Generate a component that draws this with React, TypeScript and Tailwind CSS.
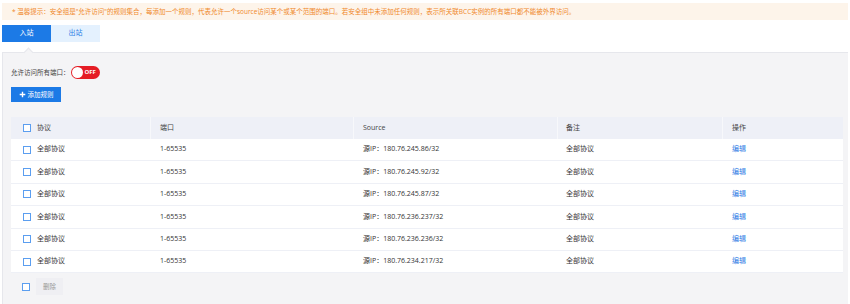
import React from 'react';

const rows = [
  '180.76.245.86/32',
  '180.76.245.92/32',
  '180.76.245.87/32',
  '180.76.236.237/32',
  '180.76.236.236/32',
  '180.76.234.217/32',
];

const Box: React.FC = () => (
  <span className="inline-block w-[8px] h-[8px] border border-[#5b9ef0] bg-white shrink-0" />
);

const App: React.FC = () => {
  return (
    <div
      className="w-[850px] h-[304px] bg-white overflow-hidden text-[#333]"
      style={{ fontFamily: '"Open Sans", "Noto Sans CJK SC", sans-serif' }}
    >
      <div className="mx-[2px] mt-[3px] h-[17px] bg-[#fdf4ea] flex items-center pl-[10px] text-[6.5px] text-[#f0892a] whitespace-nowrap">
        * 温馨提示：安全组是"允许访问"的规则集合，每添加一个规则，代表允许一个source访问某个或某个范围的端口。若安全组中未添加任何规则，表示所关联BCC实例的所有端口都不能被外界访问。
      </div>

      <div className="flex ml-[2px] mt-[5px] h-[17px] text-[7px]">
        <div className="w-[49px] bg-[#1c7ae6] text-white flex items-center justify-center">入站</div>
        <div className="w-[49px] bg-[#e4f1fe] text-[#2b7fe6] flex items-center justify-center">出站</div>
      </div>

      <div className="relative mx-[2px] mt-[10px] h-[252px] bg-[#f4f4f6] border-t border-l border-[#e6e7ec]">
        <span className="absolute left-[22px] top-[-4px] w-[7px] h-[7px] rotate-45 bg-[#f4f4f6] border-t border-l border-[#e6e7ec]" />

        <div className="flex items-center pl-[8px] pt-[13px] h-[26px]">
          <span className="text-[6.5px] text-[#444]">允许访问所有端口：</span>
          <span className="ml-[1px] w-[29px] h-[13px] rounded-full bg-[#e51d25] flex items-center pl-[1px]">
            <span className="w-[11px] h-[11px] rounded-full bg-white" />
            <span className="ml-[2px] text-[6px] font-bold text-white">OFF</span>
          </span>
        </div>

        <div className="pl-[8px] mt-[8px]">
          <button className="w-[50px] h-[15px] bg-[#1c7ae6] text-white text-[6.5px] flex items-center justify-center gap-[2px]">
            <svg width="7" height="7" viewBox="0 0 10 10">
              <path d="M5 1v8M1 5h8" stroke="white" strokeWidth="2" />
            </svg>
            添加规则
          </button>
        </div>

        <div className="ml-[8px] mt-[15px] w-[832px] text-[7px]">
          <div className="flex h-[22px] bg-[#eef0f7] text-[#444]">
            <div className="w-[140px] flex items-center gap-[6px] pl-[12px] border-r border-[#f7f8fb]">
              <Box />
              <span>协议</span>
            </div>
            <div className="w-[203px] flex items-center pl-[9px] border-r border-[#f7f8fb]">端口</div>
            <div className="w-[204px] flex items-center pl-[9px] border-r border-[#f7f8fb]">Source</div>
            <div className="w-[165px] flex items-center pl-[8px] border-r border-[#f7f8fb]">备注</div>
            <div className="flex-1 flex items-center pl-[9px]">操作</div>
          </div>
          {rows.map((ip) => (
            <div key={ip} className="flex h-[22.4px] bg-white border-b border-[#eef0f6]">
              <div className="w-[140px] flex items-center gap-[6px] pl-[12px]">
                <Box />
                <span>全部协议</span>
              </div>
              <div className="w-[203px] flex items-center pl-[9px]">1-65535</div>
              <div className="w-[204px] flex items-center pl-[9px]">源IP：{ip}</div>
              <div className="w-[165px] flex items-center pl-[8px]">全部协议</div>
              <div className="flex-1 flex items-center pl-[9px] text-[#2d7be5]">编辑</div>
            </div>
          ))}
        </div>

        <div className="flex items-center pl-[19px] mt-[5px] gap-[6px]">
          <Box />
          <span className="w-[27px] h-[17px] bg-[#efeff3] text-[#999] text-[6.5px] flex items-center justify-center">删除</span>
        </div>
      </div>
    </div>
  );
};

export default App;
